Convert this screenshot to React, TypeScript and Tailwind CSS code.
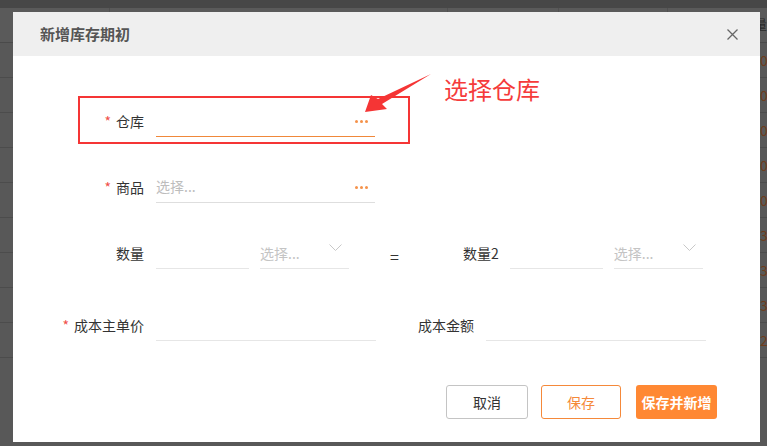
import React from 'react';

const rows = ['0', '0', '0', '0', '0', '3', '3', '3', '2'];

function Dots() {
  return (
    <div className="flex items-center gap-[2px] pr-[7px] pt-[1px]">
      <span className="w-[3px] h-[3px] rounded-full bg-[#f5924a]" />
      <span className="w-[3px] h-[3px] rounded-full bg-[#f5924a]" />
      <span className="w-[3px] h-[3px] rounded-full bg-[#f5924a]" />
    </div>
  );
}

function Chevron() {
  return (
    <svg width="13" height="8" viewBox="0 0 13 8" className="mr-[7px] -mt-[10px]">
      <polyline points="0.5,0.5 6.5,6.5 12.5,0.5" fill="none" stroke="#c8c8c8" strokeWidth="1" />
    </svg>
  );
}

function Label({ text, required, w = 'w-[131px]' }: { text: string; required?: boolean; w?: string }) {
  return (
    <div className={`${w} shrink-0 flex justify-end items-center text-[14px] text-[#333]`}>
      {required && <span className="text-[#f0504a] mr-[5px] text-[14px]">*</span>}
      <span>{text}</span>
    </div>
  );
}

export default function App() {
  return (
    <div
      className="relative w-[767px] h-[446px] overflow-hidden bg-[#585858]"
      style={{ fontFamily: '"Noto Sans CJK SC", "Noto Sans", sans-serif' }}
    >
      {/* page underneath the mask */}
      <div className="h-[8px] bg-[#474747]" />
      <div className="h-[35px] border-b border-[#4a4a4a] bg-[#5a5a5a] flex">
        <div className="w-[111px] border-r border-[#505050]" />
        <div className="w-[340px] border-r border-[#505050]" />
        <div className="w-[111px] border-r border-[#505050]" />
        <div className="w-[110px] border-r border-[#505050]" />
        <div className="pl-[86px] pt-[6px] text-[13px] text-[#2a2a2a]">量</div>
      </div>
      {rows.map((r, i) => (
        <div key={i} className="h-[35px] border-b border-[#4c4c4c] flex items-center pl-[760px] text-[14px] text-[#6e3d1c]">
          {r}
        </div>
      ))}

      {/* dialog */}
      <div className="absolute left-[13px] top-[12px] w-[747px] h-[430px] bg-white flex flex-col">
        <div className="h-[44px] bg-[#efefef] flex items-center justify-between pl-[27px] pr-[22px]">
          <span className="text-[15px] font-bold text-[#555]">新增库存期初</span>
          <svg width="11" height="11" viewBox="0 0 11 11">
            <path d="M0.5 0.5 L10.5 10.5 M10.5 0.5 L0.5 10.5" stroke="#666" strokeWidth="1.3" />
          </svg>
        </div>

        <div className="relative flex-1 flex flex-col pt-[49px]">
          {/* 仓库 */}
          <div className="flex h-[32px]">
            <Label text="仓库" required />
            <div className="ml-[12px] w-[219px] border-b border-[#f0883a] flex items-center justify-end">
              <Dots />
            </div>
          </div>

          {/* 商品 */}
          <div className="flex h-[32px] mt-[34px]">
            <Label text="商品" required />
            <div className="ml-[12px] w-[219px] border-b border-[#dedede] flex items-center justify-between text-[14px] text-[#bdbdbd]">
              <span>选择...</span>
              <Dots />
            </div>
          </div>

          {/* 数量 */}
          <div className="flex h-[31px] mt-[35px]">
            <Label text="数量" />
            <div className="ml-[12px] w-[93px] border-b border-[#e6e6e6]" />
            <div className="ml-[11px] w-[89px] border-b border-[#e6e6e6] flex items-center justify-between text-[14px] text-[#c4c4c4]">
              <span>选择...</span>
              <Chevron />
            </div>
            <div className="ml-[41px] w-[12px] flex items-center text-[16px] text-[#333] pt-[4px]">=</div>
            <div className="ml-[61px] flex items-center text-[14px] text-[#333]">数量2</div>
            <div className="ml-[11px] w-[93px] border-b border-[#e6e6e6]" />
            <div className="ml-[11px] w-[89px] border-b border-[#e6e6e6] flex items-center justify-between text-[14px] text-[#c4c4c4]">
              <span>选择...</span>
              <Chevron />
            </div>
          </div>

          {/* 成本 */}
          <div className="flex h-[32px] mt-[40px]">
            <Label text="成本主单价" required />
            <div className="ml-[12px] w-[220px] border-b border-[#e6e6e6]" />
            <Label text="成本金额" w="w-[98px]" />
            <div className="ml-[12px] w-[220px] border-b border-[#e6e6e6]" />
          </div>

          {/* buttons */}
          <div className="flex mt-[44px] pl-[433px] text-[14px]">
            <button className="w-[82px] h-[34px] border border-[#c4c4c4] rounded-[3px] text-[#333]">取消</button>
            <button className="ml-[13px] w-[80px] h-[34px] border border-[#f5893a] rounded-[3px] text-[#f5893a]">保存</button>
            <button className="ml-[15px] w-[81px] h-[34px] bg-[#ff8833] rounded-[3px] text-white font-bold">保存并新增</button>
          </div>

          {/* annotation box */}
          <div className="absolute left-[65px] top-[40px] w-[332px] h-[48px] border-2 border-[#f53535]" />
        </div>
      </div>

      {/* annotation arrow and text */}
      <svg className="absolute left-0 top-0 pointer-events-none" width="767" height="446">
        <polygon points="365,112 371,95 378,99 431,74 382,104 387,109" fill="#f53535" />
      </svg>
      <div className="absolute left-[444px] top-[73px] text-[24px] leading-[32px] text-[#f53b3b]">选择仓库</div>
    </div>
  );
}
